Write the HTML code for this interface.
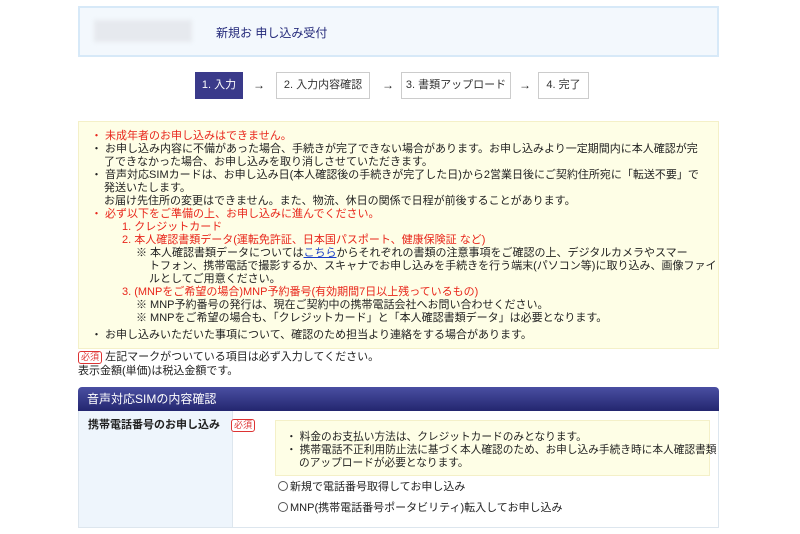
<!DOCTYPE html>
<html><head><meta charset="utf-8"><style>
*{margin:0;padding:0;box-sizing:border-box}
body{width:800px;height:534px;background:#fff;font-family:"Liberation Sans","Noto Sans CJK JP",sans-serif;font-size:11px;color:#222;position:relative;overflow:hidden}
.abs{position:absolute}
.hdr{left:78px;top:6px;width:641px;height:51px;background:#f3f8fd;border:2px solid #d7e9f8}
.blur{left:14px;top:12px;width:98px;height:22px;background:#e6e9ee;filter:blur(2px)}
.ttl{left:136px;top:16px;font-size:12px;color:#23297a}
.step{top:72px;height:27px;border:1px solid #ccc;background:#fff;font-size:11px;line-height:25px;text-align:center;color:#333;white-space:nowrap}
.arr{top:72px;line-height:27px;font-size:12px}
.yel{left:78px;top:121px;width:641px;height:228px;background:#fefee6;border:1px solid #f4f0c8}
.l{position:absolute;white-space:nowrap;line-height:13px}
.r{color:#e8261b}
.hd{left:78px;top:387px;width:641px;height:24px;background:linear-gradient(#4a4fa2,#23266f);border-radius:4px 4px 0 0;color:#fff;font-size:12px;line-height:24px;padding-left:9px}
.tbl{left:78px;top:411px;width:641px;height:117px;border:1px solid #dde6ee;border-top:none}
.badge{display:inline-block;border:1px solid #d33;color:#d33;border-radius:3px;font-size:9px;line-height:11px;padding:0 2px;background:#fff}
.rad{display:inline-block;width:10px;height:10px;border:1px solid #555;border-radius:50%;vertical-align:-1px;margin-right:2px}
</style></head><body>
<div class="abs hdr"><div class="abs blur"></div><div class="abs ttl">新規お 申し込み受付</div></div>
<div class="abs step" style="left:195px;width:48px;background:#3a3a8a;color:#fff;border-color:#3a3a8a">1. 入力</div>
<div class="abs arr" style="left:253px">→</div>
<div class="abs step" style="left:276px;width:94px">2. 入力内容確認</div>
<div class="abs arr" style="left:382px">→</div>
<div class="abs step" style="left:401px;width:110px">3. 書類アップロード</div>
<div class="abs arr" style="left:519px">→</div>
<div class="abs step" style="left:538px;width:51px">4. 完了</div>

<div class="abs yel">
<div class="l r" style="left:12px;top:8px">・ 未成年者のお申し込みはできません。</div>
<div class="l" style="left:12px;top:21px">・ お申し込み内容に不備があった場合、手続きが完了できない場合があります。お申し込みより一定期間内に本人確認が完</div>
<div class="l" style="left:25px;top:34px">了できなかった場合、お申し込みを取り消しさせていただきます。</div>
<div class="l" style="left:12px;top:47px">・ 音声対応SIMカードは、お申し込み日(本人確認後の手続きが完了した日)から2営業日後にご契約住所宛に「転送不要」で</div>
<div class="l" style="left:25px;top:60px">発送いたします。</div>
<div class="l" style="left:25px;top:73px">お届け先住所の変更はできません。また、物流、休日の関係で日程が前後することがあります。</div>
<div class="l r" style="left:12px;top:86px">・ 必ず以下をご準備の上、お申し込みに進んでください。</div>
<div class="l r" style="left:43px;top:99px">1. クレジットカード</div>
<div class="l r" style="left:43px;top:112px">2. 本人確認書類データ(運転免許証、日本国パスポート、健康保険証 など)</div>
<div class="l" style="left:57px;top:125px">※ 本人確認書類データについては<span style="color:#1a3fc8;text-decoration:underline">こちら</span>からそれぞれの書類の注意事項をご確認の上、デジタルカメラやスマー</div>
<div class="l" style="left:70px;top:138px">トフォン、携帯電話で撮影するか、スキャナでお申し込みを手続きを行う端末(パソコン等)に取り込み、画像ファイ</div>
<div class="l" style="left:70px;top:151px">ルとしてご用意ください。</div>
<div class="l r" style="left:43px;top:164px">3. (MNPをご希望の場合)MNP予約番号(有効期間7日以上残っているもの)</div>
<div class="l" style="left:57px;top:177px">※ MNP予約番号の発行は、現在ご契約中の携帯電話会社へお問い合わせください。</div>
<div class="l" style="left:57px;top:190px">※ MNPをご希望の場合も、「クレジットカード」と「本人確認書類データ」は必要となります。</div>
<div class="l" style="left:12px;top:207px">・ お申し込みいただいた事項について、確認のため担当より連絡をする場合があります。</div>
</div>
<div class="l" style="left:78px;top:351px"><span class="badge">必須</span> 左記マークがついている項目は必ず入力してください。</div>
<div class="l" style="left:78px;top:365px">表示金額(単価)は税込金額です。</div>

<div class="abs hd">音声対応SIMの内容確認</div>
<div class="abs tbl">
<div class="abs" style="left:0;top:0;width:154px;height:116px;background:#eef5fc;border-right:1px solid #dde6ee"></div>
<div class="l" style="left:9px;top:8px;font-weight:bold;font-size:11px">携帯電話番号のお申し込み</div>
<div class="l" style="left:152px;top:8px"><span class="badge">必須</span></div>
<div class="abs" style="left:196px;top:9px;width:435px;height:56px;background:#fefee6;border:1px solid #f4f0c8"></div>
<div class="l" style="left:207px;top:20px;font-size:10.7px">・ 料金のお支払い方法は、クレジットカードのみとなります。</div>
<div class="l" style="left:207px;top:33px;font-size:10.7px">・ 携帯電話不正利用防止法に基づく本人確認のため、お申し込み手続き時に本人確認書類</div>
<div class="l" style="left:220px;top:46px;font-size:10.7px">のアップロードが必要となります。</div>
<div class="l" style="left:199px;top:70px"><span class="rad"></span>新規で電話番号取得してお申し込み</div>
<div class="l" style="left:199px;top:91px"><span class="rad"></span>MNP(携帯電話番号ポータビリティ)転入してお申し込み</div>
</div>
</body></html>
